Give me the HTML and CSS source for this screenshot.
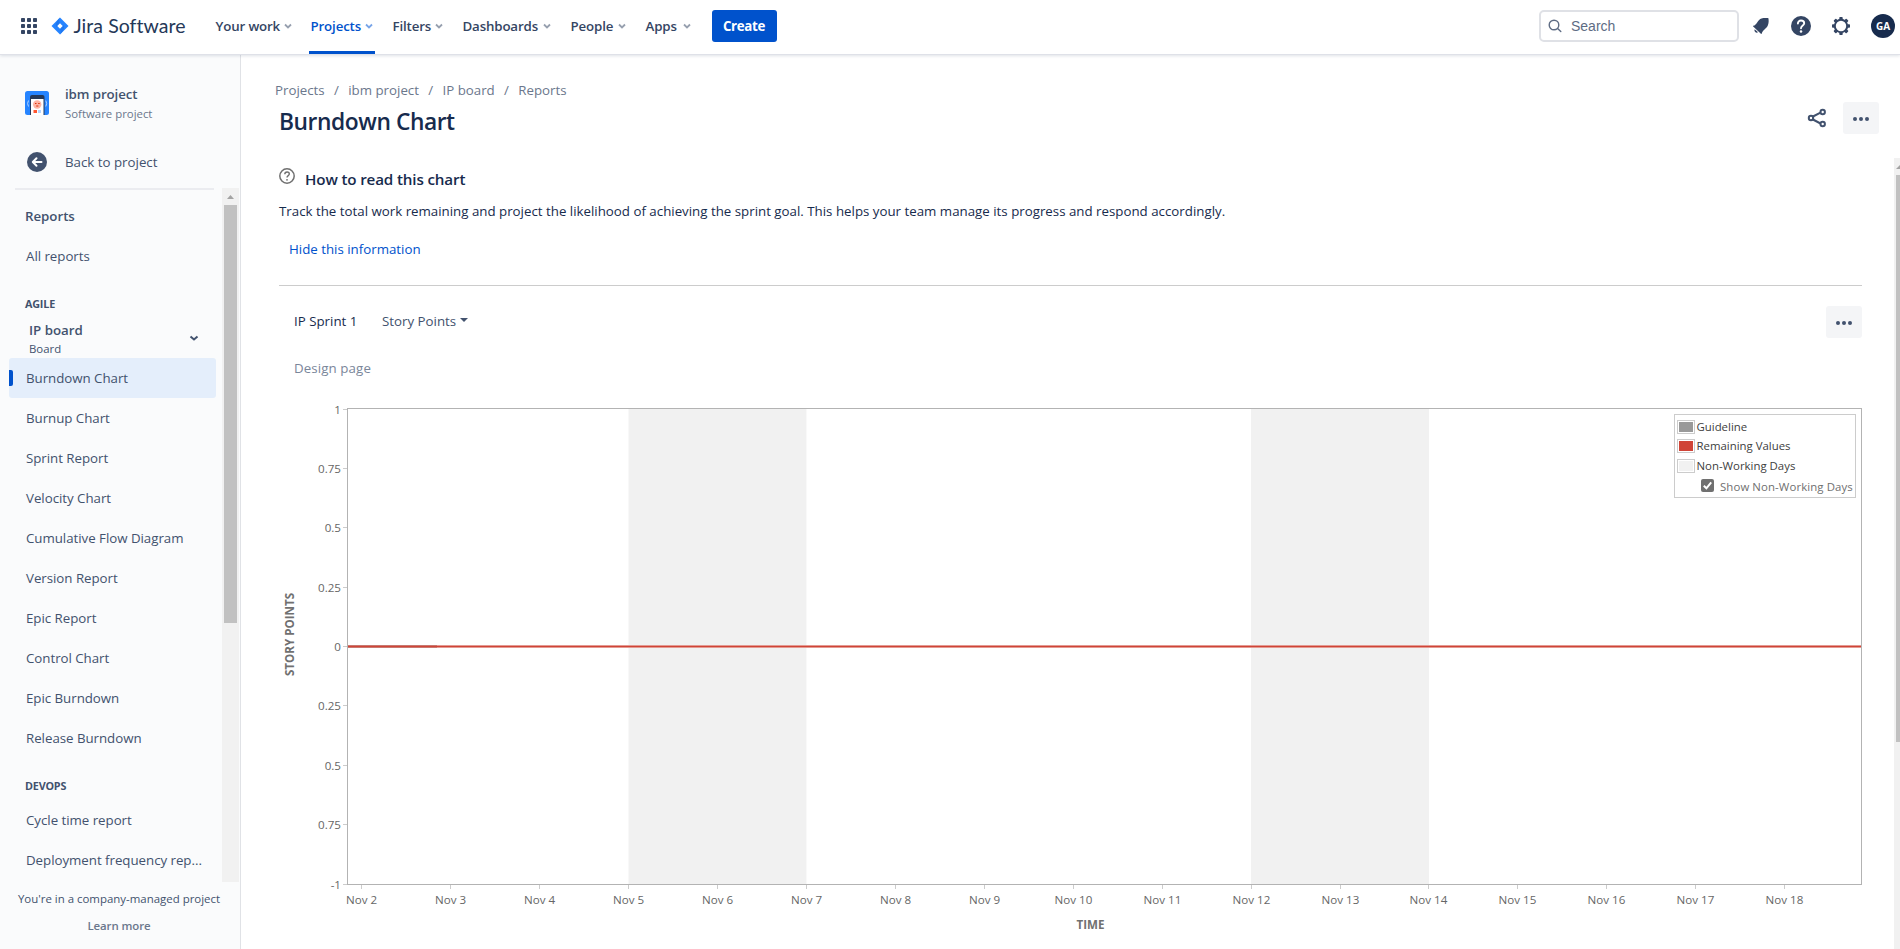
FILE: index.html
```html
<!DOCTYPE html>
<html lang="en">
<head>
<meta charset="utf-8">
<title>Burndown Chart - Jira Software</title>
<link rel="stylesheet" href="styles.css">
</head>
<body>
<div class="app">
<header class="topbar">
  <svg class="switcher" width="16" height="16" viewBox="0 0 16 16" fill="#344563"><rect width="4" height="4" rx=".8"/><rect x="6" width="4" height="4" rx=".8"/><rect x="12" width="4" height="4" rx=".8"/><rect y="6" width="4" height="4" rx=".8"/><rect x="6" y="6" width="4" height="4" rx=".8"/><rect x="12" y="6" width="4" height="4" rx=".8"/><rect y="12" width="4" height="4" rx=".8"/><rect x="6" y="12" width="4" height="4" rx=".8"/><rect x="12" y="12" width="4" height="4" rx=".8"/></svg>
  <svg class="logo" width="18" height="18" viewBox="0 0 18 18"><path d="M9 .5 17.5 9 9 17.5.5 9Z" fill="#2684ff"/><path d="M9 .5C7.200 3.500 8 5.500 11.500 9L9 6.500 5.500 10C3.500 7.500 6 3.500 9 .5Z" fill="#1f78f0"/><path d="M9 17.500C10.800 14.500 10 12.500 6.500 9L9 11.500 12.500 8C14.500 10.500 12 14.500 9 17.500Z" fill="#1f78f0"/><path d="M9 6.300 11.700 9 9 11.700 6.300 9Z" fill="#fff"/></svg>
  <span class="brand">Jira Software</span>
  <nav class="menu">
    <a class="m1">Your work<svg class="chev" viewBox="0 0 8 6"><path d="m1 1.500 3 3 3-3"/></svg></a>
    <a class="m2 active">Projects<svg class="chev" viewBox="0 0 8 6"><path d="m1 1.500 3 3 3-3"/></svg></a>
    <a class="m3">Filters<svg class="chev" viewBox="0 0 8 6"><path d="m1 1.500 3 3 3-3"/></svg></a>
    <a class="m4">Dashboards<svg class="chev" viewBox="0 0 8 6"><path d="m1 1.500 3 3 3-3"/></svg></a>
    <a class="m5">People<svg class="chev" viewBox="0 0 8 6"><path d="m1 1.500 3 3 3-3"/></svg></a>
    <a class="m6">Apps<svg class="chev" viewBox="0 0 8 6"><path d="m1 1.500 3 3 3-3"/></svg></a>
  </nav>
  <button class="create">Create</button>
  <div class="search"><svg width="14" height="14" viewBox="0 0 14 14" fill="none" stroke="#5e6c84" stroke-width="1.400" stroke-linecap="round"><circle cx="6" cy="6" r="4.800"/><path d="m9.600 9.600 3.200 3"/></svg><span>Search</span></div>
  <svg class="bell" width="18" height="18" viewBox="0 0 18 18" fill="#344563"><path d="M1.200 8.800C5 8 5.700 2.500 9.500 1.400C12 .8 14 1 16.300 1.100C16.900 3.500 16.800 6 15.900 8.300C14.600 11.700 11 12.500 9.800 16.500C9.600 17 9 17 8.600 16.600L1.200 9.600Q.8 9.100 1.200 8.800Z"/><path d="M2.700 12.200 6 15.300Q4.500 16.300 3.200 15.100 1.900 13.800 2.700 12.200Z"/></svg>
  <svg class="help" width="20" height="20" viewBox="0 0 20 20"><circle cx="10" cy="10" r="10" fill="#344563"/><path d="M6.900 7.500C6.900 5.700 8.200 4.500 10 4.500S13.200 5.700 13.200 7.300C13.200 9.500 10 9.500 10 12.200" fill="none" stroke="#fff" stroke-width="1.900" stroke-linecap="round"/><circle cx="10" cy="15.500" r="1.250" fill="#fff"/></svg>
  <svg class="gear" width="18" height="18" viewBox="0 0 18 18"><circle cx="9" cy="9" r="6.200" fill="none" stroke="#344563" stroke-width="2"/><g fill="#344563"><rect x="7.300" y="0" width="3.400" height="3" rx=".8"/><rect x="7.300" y="0" width="3.400" height="3" rx=".8" transform="rotate(45 9 9)"/><rect x="7.300" y="0" width="3.400" height="3" rx=".8" transform="rotate(90 9 9)"/><rect x="7.300" y="0" width="3.400" height="3" rx=".8" transform="rotate(135 9 9)"/><rect x="7.300" y="0" width="3.400" height="3" rx=".8" transform="rotate(180 9 9)"/><rect x="7.300" y="0" width="3.400" height="3" rx=".8" transform="rotate(225 9 9)"/><rect x="7.300" y="0" width="3.400" height="3" rx=".8" transform="rotate(270 9 9)"/><rect x="7.300" y="0" width="3.400" height="3" rx=".8" transform="rotate(315 9 9)"/></g></svg>
  <span class="avatar">GA</span>
</header>
<div class="body">
<aside class="side">
  <div class="project">
    <svg width="24" height="24" viewBox="0 0 24 24"><rect width="24" height="24" rx="2.500" fill="#2684ff"/><path d="M5 24V6Q5 4 7 4h10.500Q19.500 4 19.500 6V24Z" fill="#253858"/><path d="M6 8h12.500V24H6Z" fill="#fff"/><circle cx="12.200" cy="13.500" r="4.200" fill="#ffb3a3"/><path d="M10 12.500h1.500m1.700 0h1.500M11.200 15h2.200" stroke="#de350b" stroke-width="1"/><rect x="8.500" y="19" width="3.500" height="3" fill="#ff5630"/><rect x="13" y="19" width="3" height="3" fill="#b3d4ff"/><path d="M3.500 9.500Q1.700 12.500 3.500 15.500M20.800 9.500Q22.600 12.500 20.800 15.500" fill="none" stroke="#b3d4ff"/></svg>
    <div><b class="pname">ibm project</b><span class="ptype">Software project</span></div>
  </div>
  <a class="back"><svg width="20" height="20" viewBox="0 0 20 20"><circle cx="10" cy="10" r="10" fill="#42526e"/><path d="M14.500 10H6m3.500-3.700L5.800 10l3.700 3.700" fill="none" stroke="#fff" stroke-width="2" stroke-linecap="round" stroke-linejoin="round"/></svg><span>Back to project</span></a>
  <div class="scroll">
    <div class="list">
      <a class="item strong">Reports</a>
      <a class="item">All reports</a>
      <h3 class="agile">AGILE</h3>
      <div class="board"><div><b>IP board</b><span>Board</span></div><svg width="10" height="7" viewBox="0 0 10 7" fill="none" stroke="#42526e" stroke-width="2"><path d="m1.500 1.500 3.500 3 3.500-3"/></svg></div>
      <a class="item on">Burndown Chart</a>
      <a class="item">Burnup Chart</a>
      <a class="item">Sprint Report</a>
      <a class="item">Velocity Chart</a>
      <a class="item">Cumulative Flow Diagram</a>
      <a class="item">Version Report</a>
      <a class="item">Epic Report</a>
      <a class="item">Control Chart</a>
      <a class="item">Epic Burndown</a>
      <a class="item">Release Burndown</a>
      <h3 class="devops">DEVOPS</h3>
      <a class="item">Cycle time report</a>
      <a class="item">Deployment frequency rep...</a>
    </div>
    <div class="track"><i class="up"></i><i class="thumb"></i></div>
  </div>
  <div class="foot"><span>You're in a company-managed project</span><b>Learn more</b></div>
</aside>
<main class="main">
  <div class="crumbs"><span>Projects</span><i>/</i><span>ibm project</span><i>/</i><span>IP board</span><i>/</i><span>Reports</span></div>
  <div class="titlebar"><h1>Burndown Chart</h1>
    <svg class="share" width="20" height="20" viewBox="0 0 20 20" fill="none" stroke="#42526e" stroke-width="2"><path d="M5 9 13.500 4.600M5 11l8.500 4.500"/><circle cx="4" cy="10" r="2.200"/><circle cx="15.700" cy="4" r="2.200"/><circle cx="15.700" cy="16" r="2.200"/></svg>
    <span class="more"><i></i><i></i><i></i></span></div>
  <div class="pane">
    <div class="content">
      <div class="how"><svg width="16" height="16" viewBox="0 0 16 16"><circle cx="8" cy="8" r="7.200" fill="none" stroke="#707070" stroke-width="1.500"/><path d="M5.800 6.300C5.800 4.900 6.800 4 8.100 4s2.200.9 2.200 2.100C10.300 7.700 8 7.600 8 9.500" fill="none" stroke="#707070" stroke-width="1.400"/><circle cx="8" cy="11.800" r=".9" fill="#707070"/></svg><h2>How to read this chart</h2></div>
      <p class="desc">Track the total work remaining and project the likelihood of achieving the sprint goal. This helps your team manage its progress and respond accordingly.</p>
      <a class="hide">Hide this information</a>
      <div class="filters"><span class="sprint">IP Sprint 1</span><span class="points">Story Points</span><i class="caret"></i><span class="more"><i></i><i></i><i></i></span></div>
      <div class="goal">Design page</div>
      <div class="chartwrap">
      <svg class="chart" width="1584" height="549" viewBox="279 400 1584 549">
        <g fill="#f1f1f1"><rect x="628.500" y="409" width="177.900" height="475"/><rect x="1251" y="409" width="178" height="475"/></g>
        <path d="M343 409.500h4M343 468.500h4M343 527.500h4M343 587.500h4M343 646.500h4M343 705.500h4M343 765.500h4M343 824.500h4M343 884.500h4" stroke="#ccc"/>
        <path d="M361.500 885v4M450.500 885v4M539.500 885v4M628.500 885v4M717.500 885v4M806.500 885v4M895.500 885v4M984.500 885v4M1073.500 885v4M1162.500 885v4M1251.500 885v4M1340.500 885v4M1428.500 885v4M1517.500 885v4M1606.500 885v4M1695.500 885v4M1784.500 885v4" stroke="#ccc"/>
        <rect x="347.500" y="408.500" width="1514" height="476" fill="none" stroke="#b3b3b3"/>
        <path d="M348 646.500H1861" stroke="#e39a92" stroke-width="3"/><path d="M348 646.500h89" stroke="#c77970" stroke-width="3"/><path d="M348 646.500H1861" stroke="#d04437"/>
        <g class="yl" text-anchor="end"><text x="341" y="414">1</text><text x="341" y="473">0.75</text><text x="341" y="532">0.5</text><text x="341" y="592">0.25</text><text x="341" y="651">0</text><text x="341" y="710">0.25</text><text x="341" y="770">0.5</text><text x="341" y="829">0.75</text><text x="341" y="889">-1</text></g>
        <g class="xl" text-anchor="middle"><text x="361.500" y="904">Nov 2</text><text x="450.500" y="904">Nov 3</text><text x="539.500" y="904">Nov 4</text><text x="628.500" y="904">Nov 5</text><text x="717.500" y="904">Nov 6</text><text x="806.500" y="904">Nov 7</text><text x="895.500" y="904">Nov 8</text><text x="984.500" y="904">Nov 9</text><text x="1073.500" y="904">Nov 10</text><text x="1162.500" y="904">Nov 11</text><text x="1251.500" y="904">Nov 12</text><text x="1340.500" y="904">Nov 13</text><text x="1428.500" y="904">Nov 14</text><text x="1517.500" y="904">Nov 15</text><text x="1606.500" y="904">Nov 16</text><text x="1695.500" y="904">Nov 17</text><text x="1784.500" y="904">Nov 18</text></g>
        <g class="al" text-anchor="middle"><text x="1090.500" y="929">TIME</text><text transform="translate(294 634.500) rotate(-90)">STORY POINTS</text></g>
      </svg>
      <div class="legend">
        <div class="lg"><i class="sw s1"></i>Guideline</div>
        <div class="lg"><i class="sw s2"></i>Remaining Values</div>
        <div class="lg"><i class="sw s3"></i>Non-Working Days</div>
        <div class="lshow"><svg width="13" height="13" viewBox="0 0 13 13"><rect width="13" height="13" rx="2" fill="#707070"/><path d="m2.800 6.700 2.600 2.600 4.800-6" fill="none" stroke="#fff" stroke-width="2"/></svg>Show Non-Working Days</div>
      </div>
      </div>
    </div>
    <div class="mtrack"><i class="mup"></i><i class="mthumb"></i></div>
  </div>
</main>
</div>
</div>
</body>
</html>
```
FILE: styles.css
```css
* { box-sizing: border-box; }
body { margin: 0; font-family: "Open Sans", "Noto Sans", sans-serif; font-size: 13.3px; line-height: 20px; color: #172b4d; background: #fff; overflow: hidden; }
h1, h2, h3, p { margin: 0; }
i { font-style: normal; }
svg { display: block; flex: none; }
.app { height: 949px; width: 1900px; display: flex; flex-direction: column; overflow: hidden; }

.topbar { height: 55px; flex: none; display: flex; align-items: center; padding: 0 0 3px 21px; border-bottom: 1px solid #dfe1e8; box-shadow: 0 1px 3px #091e4220; z-index: 2; background: #fff; white-space: nowrap; }
.logo { margin-left: 13.500px; }
.brand { font-family: Lato, sans-serif; font-size: 19.500px; letter-spacing: .05px; color: #253858; margin-left: 5px; width: 112px; }
.menu { display: flex; align-self: stretch; margin: 0 0 -3px 30px; font-weight: 600; color: #344563; }
.menu a { display: flex; align-items: center; justify-content: space-between; padding-bottom: 3px; margin-right: 20px; letter-spacing: -.15px; }
.chev { width: 8px; height: 6px; fill: none; stroke: #97a0af; stroke-width: 1.800; }
.m1 { width: 76px; }
.menu .m2 { width: 66px; margin: 0 18px 0 -3px; padding: 0 2px; color: #0052cc; border-bottom: 3px solid #0052cc; }
.m2 .chev { stroke: #79a5e8; }
.m3 { width: 50px; } .m4 { width: 88px; } .m5 { width: 55px; }
.m6 { width: 45px; }
.create { width: 65px; height: 32px; border: 0; border-radius: 3px; background: #0052cc; color: #fff; font: 700 13.3px "Open Sans", sans-serif; letter-spacing: -.3px; padding: 0; margin-left: 1px; }
.search { width: 200px; height: 32px; border: 2px solid #dfe1e6; border-radius: 5px; margin-left: auto; display: flex; align-items: center; padding-left: 7px; gap: 9px; color: #5e6c84; font: 14px "Liberation Sans", sans-serif; }
.bell { margin-left: 13px; } .help { margin-left: 21px; } .gear { margin-left: 21px; }
.avatar { width: 24px; height: 24px; border-radius: 50%; background: #172b4d; color: #fff; font-size: 10px; font-weight: 700; line-height: 24px; text-align: center; margin: 0 5px 0 21px; }

.body { display: flex; flex: 1; min-height: 0; }
.side { width: 241px; flex: none; background: #fafbfc; border-right: 1px solid #e0e2e6; display: flex; flex-direction: column; color: #42526e; }
.project { display: flex; padding: 30px 0 0 25px; gap: 16px; height: 87px; align-items: flex-start; }
.project svg { margin-top: 6px; }
.pname { display: block; font-weight: 600; line-height: 18px; letter-spacing: -.1px; }
.ptype { display: block; font-size: 11.400px; line-height: 22px; color: #6b778c; }
.back { display: flex; align-items: center; height: 40px; padding-left: 27px; gap: 18px; }
.scroll { display: flex; height: 694px; margin-top: 6px; }
.list { width: 222px; padding: 8px 6px 0 9px; overflow: hidden; position: relative; }
.list::before { content: ""; position: absolute; left: 15px; top: 0; width: 199px; height: 2px; background: #ebecf0; }
.item { display: flex; align-items: center; height: 40px; padding-left: 17px; white-space: nowrap; border-radius: 3px; letter-spacing: -.03px; }
.strong { font-weight: 600; padding-left: 16px; }
.on { background: #e4eefb; position: relative; }
.on::before { content: ""; position: absolute; left: 0; top: 12px; width: 4px; height: 16px; background: #0052cc; border-radius: 0 2px 2px 0; }
.list h3 { padding-left: 16px; font-size: 10.800px; line-height: 16px; font-weight: 700; letter-spacing: -.2px; }
.agile { margin-top: 20px; }
.board { height: 46px; display: flex; align-items: center; justify-content: space-between; padding: 6px 17px 0 20px; }
.board svg { margin-top: 1px; }
.board b { display: block; font-weight: 600; line-height: 20px; }
.board span { display: block; font-size: 11.400px; line-height: 17px; }
.devops { margin: 20px 0 6px; }
.track { width: 17px; background: #f1f1f1; display: flex; flex-direction: column; align-items: center; }
.up { width: 7px; height: 4px; margin: 7px 0 6px; background: #a3a3a3; clip-path: polygon(50% 0, 100% 100%, 0 100%); }
.thumb { width: 13px; height: 418px; background: #c1c1c1; }
.foot { text-align: center; font-size: 11.450px; display: flex; flex-direction: column; padding: 7px 2px 0 0; gap: 7px; white-space: nowrap; }
.foot b { font-weight: 600; color: #6b778c; letter-spacing: -.1px; }

.main { flex: 1; min-width: 0; display: flex; flex-direction: column; }
.crumbs { padding: 25px 0 0 34px; display: flex; color: #6b778c; }
.crumbs i { width: 23.500px; text-align: center; }
.titlebar { display: flex; height: 58px; padding: 2px 21px 0 38px; align-items: flex-start; }
h1 { font-size: 22.800px; font-weight: 600; line-height: 40px; letter-spacing: -.45px; }
.share { margin: 6px 16px 0 auto; }
.more { width: 36px; height: 32px; background: #f4f5f7; border-radius: 3px; display: flex; gap: 2px; align-items: center; justify-content: center; padding-top: 2px; }
.more i { width: 4px; height: 4px; background: #42526e; border-radius: 50%; }
.pane { display: flex; flex: 1; min-height: 0; }
.content { width: 1583px; margin-left: 38px; flex: none; }
.how { display: flex; gap: 10px; padding-top: 10px; }
h2 { font-size: 15.200px; font-weight: 600; line-height: 23px; letter-spacing: -.15px; }
.desc { margin-top: 10px; white-space: nowrap; }
.hide { display: block; height: 46px; margin-top: 18px; padding-left: 10px; color: #0052cc; }
.filters { display: flex; align-items: center; border-top: 1px solid #ccc; padding: 20px 0 0 15px; height: 53px; margin-bottom: 20px; }
.filters span:not(.more) { padding-bottom: 2px; }
.sprint { width: 88px; } .points { color: #42526e; width: 74px; white-space: nowrap; }
.caret { margin: -5px 0 0 4px; border: 4px solid transparent; border-top-color: #42526e; border-bottom: 0; }
.filters .more { margin-left: auto; }
.goal { padding-left: 15px; color: #7a869a; margin-bottom: 22px; letter-spacing: .1px; }
.chartwrap { position: relative; }
.chart { font-size: 11.600px; }
.yl, .xl { fill: #666; }
.al { font-weight: 700; fill: #707070; font-size: 11.600px; }
.legend { position: absolute; left: 1395px; top: 14px; width: 182px; height: 84px; border: 1px solid #ccc; background: #fff; padding: 2px; font-size: 11.400px; white-space: nowrap; color: #404040; }
.lg { display: flex; align-items: center; gap: 1.500px; height: 19.600px; }
.sw { width: 18px; height: 14px; border: 1px solid #ccc; padding: 1px; background-clip: content-box; }
.s1 { background-color: #999; } .s2 { background-color: #d04437; } .s3 { background-color: #f1f1f1; }
.lshow { display: flex; padding-left: 24px; gap: 6px; color: #707070; height: 23px; align-items: center; letter-spacing: .1px; }
.lshow svg { margin-top: -4px; }
.mtrack { margin-left: auto; width: 6px; background: #f1f1f1; padding-left: 2px; }
.mup { display: block; width: 4px; height: 4px; margin: 7px 0 6px; background: #a3a3a3; clip-path: polygon(100% 0, 100% 100%, 0 100%); }
.mthumb { display: block; height: 567px; background: #c1c1c1; }
```
